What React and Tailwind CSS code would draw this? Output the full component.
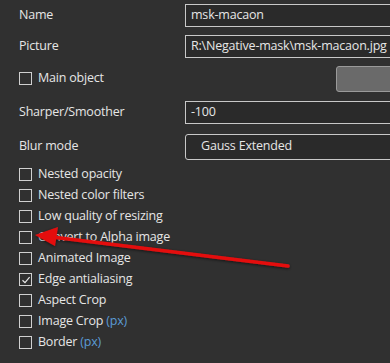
const checks = [
  { label: "Nested opacity" },
  { label: "Nested color filters" },
  { label: "Low quality of resizing" },
  { label: "Convert to Alpha image" },
  { label: "Animated Image" },
  { label: "Edge antialiasing", checked: true },
  { label: "Aspect Crop" },
  { label: "Image Crop", px: true },
  { label: "Border", px: true },
];

function Box({ checked }) {
  return (
    <span className="w-[13px] h-[13px] border border-[#d0d0d0] flex items-center justify-center shrink-0">
      {checked && (
        <svg width="10" height="10" viewBox="0 0 10 10">
          <path d="M1.5 5.2 L4 7.6 L8.6 2.2" fill="none" stroke="#e8e8e8" strokeWidth="1.2" />
        </svg>
      )}
    </span>
  );
}

function Field({ label, value, rounded }) {
  return (
    <div className="flex items-center h-[31px]">
      <div className="w-[185px] pl-[19px]">{label}</div>
      <div
        className={`flex-1 min-w-0 whitespace-nowrap overflow-hidden border border-[#c8c8c8] bg-[#2a2a2a] flex items-center -mr-2 ${
          rounded ? "rounded-[3px] pl-[15px] h-[26px]" : "pl-[5px] h-[23px]"
        }`}
      >
        {value}
      </div>
    </div>
  );
}

export default function App() {
  return (
    <div
      className="relative w-[390px] h-[363px] overflow-hidden bg-[#303030] text-[#e6e6e6] text-[12.5px] tracking-[-0.2px]"
      style={{ fontFamily: '"Open Sans", "Noto Sans", sans-serif' }}
    >
      <Field label="Name" value="msk-macaon" />
      <Field label="Picture" value="R:\Negative-mask\msk-macaon.jpg" />
      <div className="flex items-center h-[34px] pb-[1px]">
        <div className="flex items-center gap-[6px] pl-[19px] flex-1">
          <Box />
          <span>Main object</span>
        </div>
        <div className="w-[70px] h-[26px] bg-[#6a6a6a] border border-[#9a9a9a] rounded-[3px] -mr-4" />
      </div>
      <div className="mt-[1px]">
        <Field label="Sharper/Smoother" value="-100" />
      </div>
      <div className="mt-[3px]">
        <Field label="Blur mode" value="Gauss Extended" rounded />
      </div>
      <div className="pt-[2px] flex flex-col">
        {checks.map((c) => (
          <div key={c.label} className="flex items-center gap-[6px] pl-[19px] h-[21px]">
            <Box checked={c.checked} />
            <span>
              {c.label}
              {c.px && <span className="text-[#5b9bd5]"> (px)</span>}
            </span>
          </div>
        ))}
      </div>
      <svg className="absolute left-0 top-0" width="390" height="363" viewBox="0 0 390 363">
        <defs>
          <filter id="sh" x="-10%" y="-50%" width="120%" height="200%">
            <feDropShadow dx="0" dy="1" stdDeviation="1.5" floodColor="#000" floodOpacity="0.6" />
          </filter>
        </defs>
        <g filter="url(#sh)">
          <line x1="288" y1="266" x2="52" y2="237" stroke="#e41010" strokeWidth="3.5" strokeLinecap="round" />
          <polygon points="35,235 58,227 55,246" fill="#e41010" />
        </g>
      </svg>
    </div>
  );
}
